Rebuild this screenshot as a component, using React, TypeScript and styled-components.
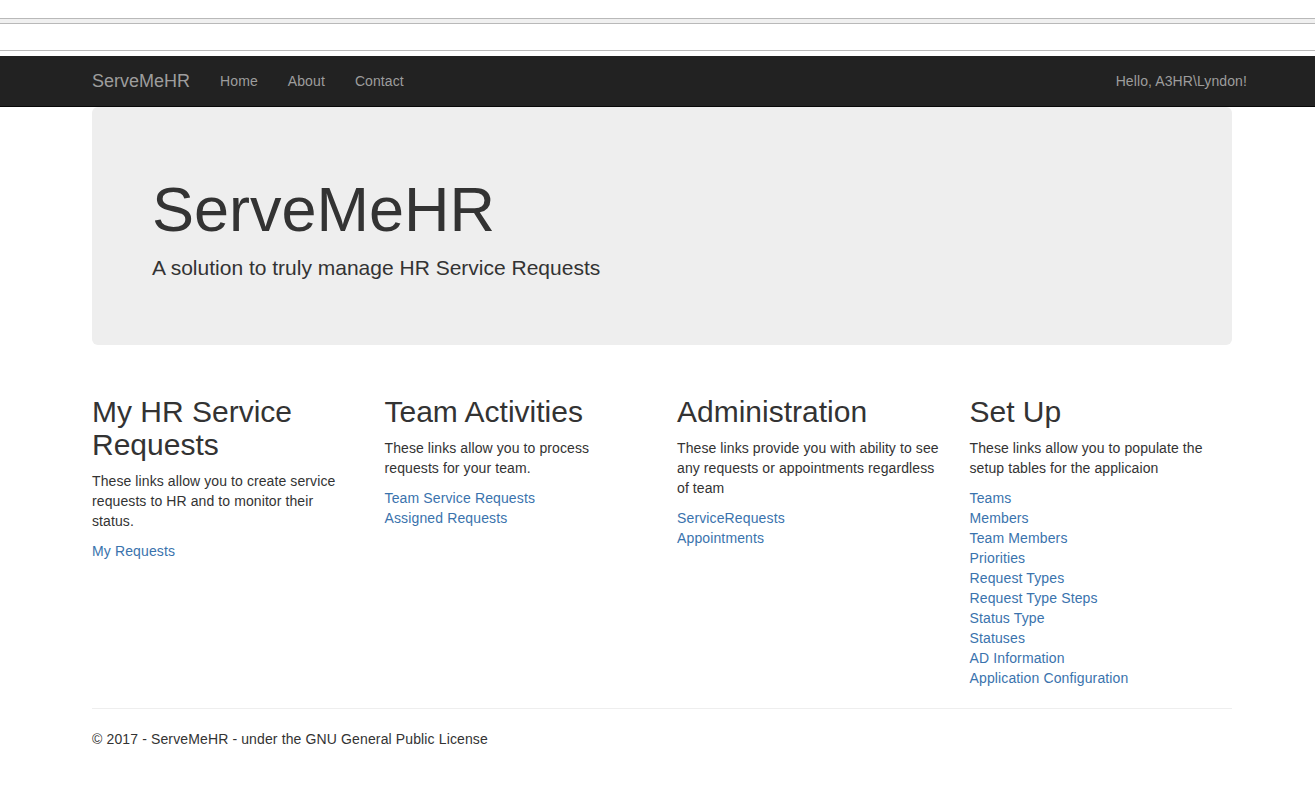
import styled, { createGlobalStyle } from "styled-components";

const GlobalStyle = createGlobalStyle`
  * {
    box-sizing: border-box;
  }
  body {
    margin: 0;
    background: #fff;
    color: #333;
    font-family: "Liberation Sans", Arial, sans-serif;
    font-size: 14px;
    line-height: 20px;
  }
`;

const Chrome = styled.div`
  height: 56px;
  padding-top: 18px;
  background: #fff;
`;

const ChromeBar = styled.div`
  height: 6px;
  background: #f0f0f0;
  border-top: 1px solid #b9b9b9;
  border-bottom: 1px solid #b9b9b9;
`;

const ChromeField = styled.div`
  height: 27px;
  border-bottom: 1px solid #b9b9b9;
`;

const Container = styled.div`
  width: 1170px;
  margin-left: 77px;
  padding: 0 15px;
`;

const Navbar = styled.nav`
  background: #222;
  border-bottom: 1px solid #080808;
`;

const NavInner = styled(Container)`
  display: flex;
  align-items: center;
  height: 50px;
`;

const Brand = styled.a`
  color: #9d9d9d;
  font-size: 18px;
  line-height: 20px;
  padding-right: 15px;
  text-decoration: none;
`;

const NavLink = styled.a<{ $right?: boolean }>`
  color: #9d9d9d;
  padding: 0 15px;
  letter-spacing: 0.1px;
  text-decoration: none;
  margin-left: ${(p) => (p.$right ? "auto" : "0")};
  margin-right: ${(p) => (p.$right ? "-30px" : "0")};
`;

const Jumbotron = styled.div`
  background: #eee;
  border-radius: 6px;
  padding: 48px 60px;
  margin-bottom: 30px;
`;

const Title = styled.h1`
  font-size: 63px;
  font-weight: 400;
  line-height: 69px;
  margin: 20px 0 10px;
`;

const Lead = styled.p`
  font-size: 21px;
  line-height: 28px;
  margin: 0 0 15px;
`;

const Row = styled.div`
  display: grid;
  grid-template-columns: repeat(4, 1fr);
  margin: 0 -15px;
`;

const Col = styled.div`
  padding: 0 15px;
`;

const Heading = styled.h2`
  font-size: 30px;
  font-weight: 400;
  line-height: 33px;
  margin: 20px 0 10px;
`;

const Text = styled.p`
  margin: 0 0 10px;
  letter-spacing: 0.095px;
`;

const Links = styled.div`
  display: flex;
  flex-direction: column;
  align-items: flex-start;
`;

const Link = styled.a`
  color: #3a73ad;
  letter-spacing: 0.13px;
  text-decoration: none;
`;

const Rule = styled.hr`
  border: 0;
  border-top: 1px solid #eee;
  margin: 20px 0;
`;

const Footer = styled.footer`
  margin: 0 0 10px;
  letter-spacing: 0.13px;
`;

const sections = [
  {
    title: "My HR Service Requests",
    text: "These links allow you to create service requests to HR and to monitor their status.",
    links: ["My Requests"],
  },
  {
    title: "Team Activities",
    text: "These links allow you to process requests for your team.",
    links: ["Team Service Requests", "Assigned Requests"],
  },
  {
    title: "Administration",
    text: "These links provide you with ability to see any requests or appointments regardless of team",
    links: ["ServiceRequests", "Appointments"],
  },
  {
    title: "Set Up",
    text: "These links allow you to populate the setup tables for the applicaion",
    links: [
      "Teams",
      "Members",
      "Team Members",
      "Priorities",
      "Request Types",
      "Request Type Steps",
      "Status Type",
      "Statuses",
      "AD Information",
      "Application Configuration",
    ],
  },
];

export default function App() {
  return (
    <>
      <GlobalStyle />
      <Chrome>
        <ChromeBar />
        <ChromeField />
      </Chrome>
      <Navbar>
        <NavInner>
          <Brand href="#">ServeMeHR</Brand>
          <NavLink href="#">Home</NavLink>
          <NavLink href="#">About</NavLink>
          <NavLink href="#">Contact</NavLink>
          <NavLink href="#" $right>
            Hello, A3HR\Lyndon!
          </NavLink>
        </NavInner>
      </Navbar>
      <Container>
        <Jumbotron>
          <Title>ServeMeHR</Title>
          <Lead>A solution to truly manage HR Service Requests</Lead>
        </Jumbotron>
        <Row>
          {sections.map((s) => (
            <Col key={s.title}>
              <Heading>{s.title}</Heading>
              <Text>{s.text}</Text>
              <Links>
                {s.links.map((l) => (
                  <Link key={l} href="#">
                    {l}
                  </Link>
                ))}
              </Links>
            </Col>
          ))}
        </Row>
        <Rule />
        <Footer>© 2017 - ServeMeHR - under the GNU General Public License</Footer>
      </Container>
    </>
  );
}
